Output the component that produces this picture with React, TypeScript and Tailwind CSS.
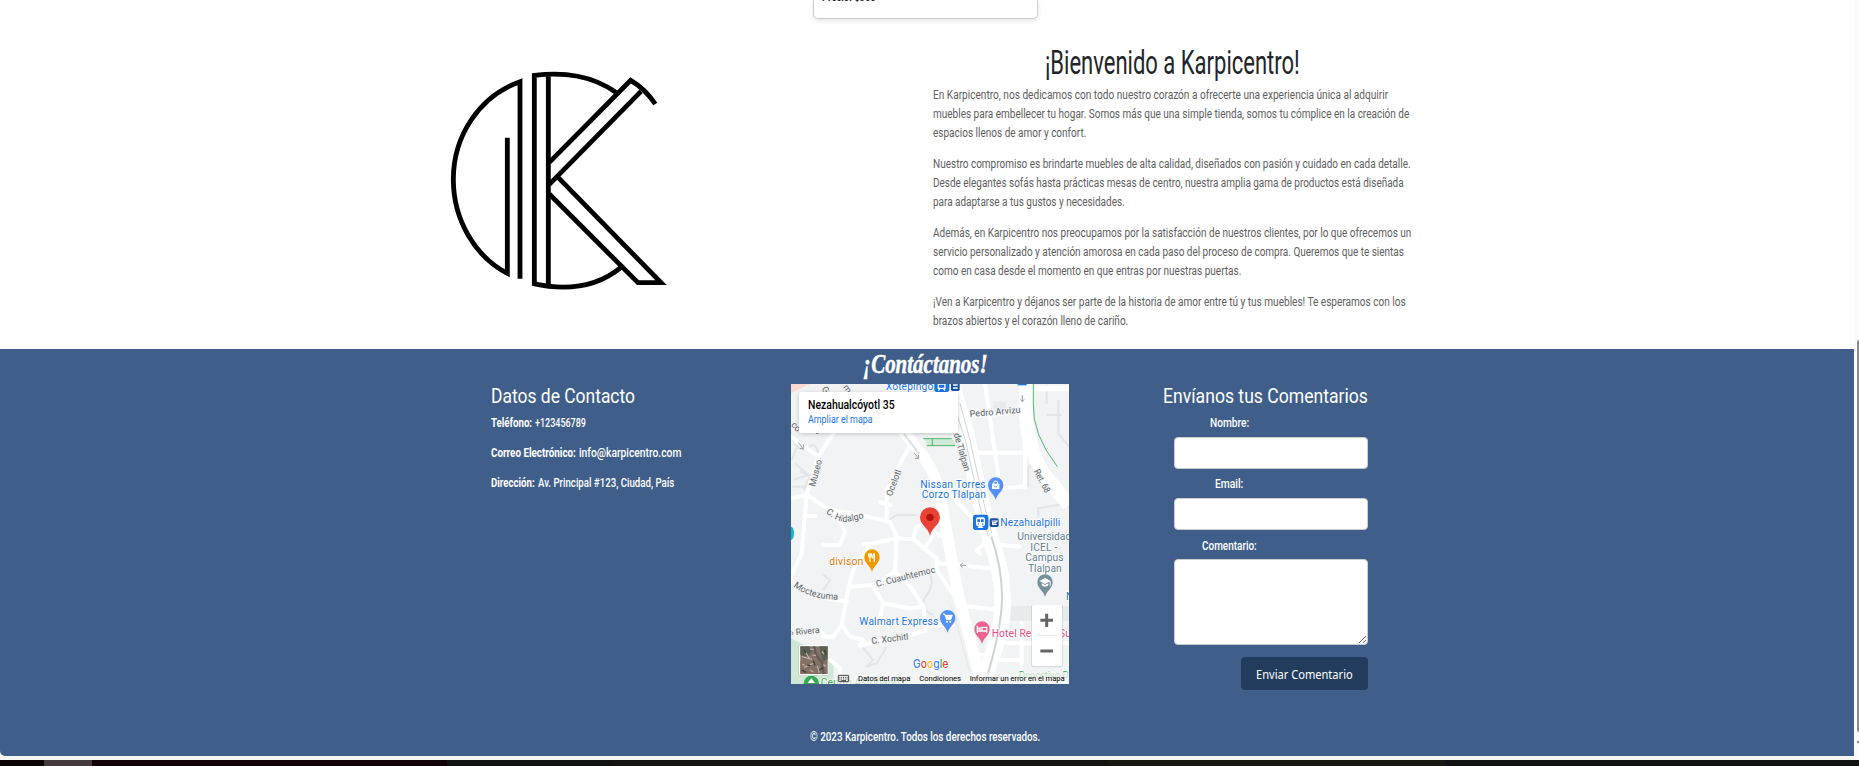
import { useLayoutEffect, useRef } from "react";
import type { ReactNode } from "react";

/** One line of text, condensed or widened to the width of its box. */
function Fit({ className = "", children }: { className?: string; children: ReactNode }) {
  const box = useRef<HTMLDivElement>(null);
  const inner = useRef<HTMLSpanElement>(null);
  useLayoutEffect(() => {
    if (!box.current || !inner.current) return;
    const ratio = box.current.clientWidth / inner.current.offsetWidth;
    inner.current.style.transform = `scaleX(${ratio})`;
  }, []);
  return (
    <div ref={box} className={`whitespace-nowrap ${className}`}>
      <span ref={inner} className="inline-block origin-left">
        {children}
      </span>
    </div>
  );
}

function Logo() {
  return (
    <svg
      viewBox="0 0 780 780"
      className="h-[260px] w-[260px] shrink-0"
      fill="none"
      stroke="#000"
      strokeWidth="14.5"
    >
      <path d="M270 686V95C150 138 70 255 70 388C70 510 135 620 232 670V263" />
      <path d="M355 705V76M313 707V76C405 66 485 76 560 128" />
      <path d="M310 701C405 722 495 716 573 652" />
      <path d="M358 337L602 91Q645 116 676 162" />
      <path d="M633 124L358 403" />
      <path d="M382 380L693 698H624L358 432" />
    </svg>
  );
}

function Pin({ x, y, color, children }: { x: number; y: number; color: string; children?: ReactNode }) {
  return (
    <g transform={`translate(${x} ${y})`}>
      <path d="M0 44C-4 26-23 18-23-1A23 23 0 0 1 23-1C23 18 4 26 0 44Z" fill={color} />
      {children}
    </g>
  );
}

function MapArt() {
  return (
    <svg
      viewBox="33 132 834 900"
      className="block h-[300px] w-[278px]"
      fontFamily="Roboto, sans-serif"
      fontSize="31"
    >
      <defs>
        <path id="hidalgo" d="M137 518Q175 550 205 545T262 530" />
        <path id="moctezuma" d="M40 738Q85 778 185 780" />
      </defs>
      <rect x="33" y="132" width="834" height="900" fill="#f1f3f4" />
      <path d="M33 132H90L33 160Z" fill="#fbd9d3" />
      <path d="M33 895L95 925L160 970V1032H33Z" fill="#cfe8d5" />
      <path d="M690 798H867V842H690Z" fill="#e8eaed" />
      <path d="M640 185h38v30h-38z" fill="#e8eaed" />
      <path d="M430 294H515L530 318H445Z" fill="#ceead6" />
      <g fill="none" stroke="#e3e5e8" strokeWidth="6">
        <path d="M40 310q30 30 50 10t30 45-60 30M45 370l45 40-20 40M40 420l60-20M60 300l-25 60M35 440h40" />
        <path d="M745 440V385L765 360M775 530V505L867 490M835 180v100l32 40M800 225h45M800 132v60" />
        <path d="M440 685q30 40 0 80t20 60M130 705l20 15-20 30M250 925l30 35-20 20 30-10 30-50M320 545l30-20 60 0" />
      </g>
      <g fill="none" stroke="#fff" strokeLinecap="round" strokeLinejoin="round" strokeWidth="12">
        <path d="M33 290L115 350L160 280L215 210" />
        <path d="M115 350L80 465L65 640L33 710" />
        <path d="M33 475L80 465L150 510L240 525L330 545L350 590L345 700M80 528H106" />
        <path d="M385 325L320 450V545M300 487L330 495" />
        <path d="M130 615H180L195 575L160 510" />
        <path d="M250 612H270L350 595L400 598L470 655V690L520 765" />
        <path d="M400 595L410 560L445 550M438 618L465 580L490 590" />
        <path d="M265 620L220 690L205 745L185 855L160 890L130 890L125 870" />
        <path d="M33 720L90 765L200 785M210 740L280 735L345 695L395 745L430 800L440 870L380 890L240 915" />
        <path d="M280 740L310 790L390 805L430 800M310 790L300 830" />
        <path d="M185 855L210 890L250 900L240 918" />
        <path d="M475 670L630 685M550 798L640 808M455 855H520" />
        <path d="M575 338H735M565 230L735 215M615 132L660 440M735 132V440L660 445" />
        <path d="M500 450L590 550M600 640L590 630L615 610L720 620" />
        <path d="M670 910H867M660 960H725V1032M725 850V960M600 945H640M150 960L180 985V1000" />
      </g>
      <g fill="none" stroke="#fff" strokeLinejoin="round">
        <path d="M290 170L430 350Q480 420 490 520L535 765L605 1032" strokeWidth="34" />
        <path d="M515 132L560 290L610 520L635 610Q668 690 668 790T602 1032" strokeWidth="50" />
        <path d="M740 132Q725 300 790 400L867 495" strokeWidth="42" />
        <path d="M730 145H867" strokeWidth="17" />
      </g>
      <g fill="none" strokeWidth="2.5">
        <path d="M520 190L556 300L600 500L625 590M540 190L570 300L614 500L635 580" stroke="#c6cbd0" />
        <path d="M634 590Q668 690 666 780T615 1032" stroke="#ccd3d8" strokeWidth="6" />
        <path d="M515 800L580 1032" stroke="#dfe3e6" />
        <path d="M372 282L418 342" stroke="#d5e2e0" strokeWidth="6" />
        <path d="M430 296H515M440 317H525M457 296V317M760 132V190Q755 280 832 380" stroke="#53b66c" strokeWidth="3" />
      </g>
      <g fill="none" stroke="#9aa0a6" strokeWidth="3">
        <path d="M55 307l15 20m-11-2 11 2V313M402 338l14 18m-11-1 11 1V344M727 165v20m-6-7 6 7 6-7M558 676H541m7-6-8 6 8 6" />
      </g>

      <path d="M33 560A9 20 0 0 1 33 600Z" fill="#12b5cb" />
      <g fill="#5f6368" fontSize="27" stroke="#f1f3f4" strokeWidth="5" paintOrder="stroke">
        <text transform="translate(124 148) rotate(52)">Gri</text>
        <text transform="translate(188 142) rotate(55)">ma</text>
        <text transform="translate(32 255) rotate(50)">co</text>
        <text transform="translate(98 268) rotate(50)">io</text>
        <text transform="translate(570 231) rotate(-5)" textLength="153">Pedro Arvizu</text>
        <text transform="translate(521 282) rotate(74)" textLength="118">de Tlalpan</text>
        <text transform="translate(105 441) rotate(-75)" textLength="82">Museo</text>
        <text transform="translate(335 470) rotate(-69)" textLength="82">Ocelotl</text>
        <text transform="translate(761 394) rotate(62)" textLength="75" lengthAdjust="spacingAndGlyphs">Ret. 68</text>
        <text>
          <textPath href="#hidalgo">C. Hidalgo</textPath>
        </text>
        <text transform="translate(290 741) rotate(-14)" textLength="183">C. Cuauhtemoc</text>
        <text>
          <textPath href="#moctezuma">Moctezuma</textPath>
        </text>
        <text transform="translate(34 887) rotate(-6)" textLength="86">› Rivera</text>
        <text transform="translate(275 912) rotate(-7)" textLength="112">C. Xochitl</text>
      </g>

      <g stroke="#fff" strokeWidth="5" paintOrder="stroke">
        <g fill="#1a73e8">
          <text x="317" y="151" textLength="143">Xotepingo</text>
          <text x="421" y="443" textLength="196">Nissan Torres</text>
          <text x="425" y="474" textLength="193">Corzo Tlalpan</text>
          <text x="661" y="558" textLength="180">Nezahualpilli</text>
          <text x="238" y="856" textLength="237">Walmart Express</text>
          <text x="858" y="780">N</text>
        </g>
        <text x="148" y="674" textLength="102" fill="#e37400">divison</text>
        <g fill="#607d8b">
          <text x="712" y="600">Universidad</text>
          <text x="751" y="632" textLength="80">ICEL -</text>
          <text x="736" y="663" textLength="115">Campus</text>
          <text x="744" y="695" textLength="101">Tlalpan</text>
        </g>
        <text x="635" y="891" fill="#ea4b83" textLength="238">Hotel Real del Su</text>
        <text x="716" y="1015" fill="#34a853" fontSize="29">Deportivo D</text>
        <text x="122" y="1038" fill="#34a853" textLength="236">Centro Asturiano</text>
      </g>

      <g>
        <rect x="463" y="110" width="45" height="46" rx="8" fill="#1a73e8" />
        <path d="M475 132h20v13h-20zM475 152l5-6m15 6-5-6" stroke="#fff" strokeWidth="4" fill="none" />
        <rect x="513" y="124" width="26" height="29" rx="5" fill="#174ea6" />
        <path d="M519 135h14M519 144h14" stroke="#fff" strokeWidth="4" />
        <path d="M713 132h27v4h-27z" fill="#1a73e8" />
        <rect x="579" y="524" width="46" height="46" rx="8" fill="#1a73e8" />
        <path
          d="M588 537q0-5 5-5h17q5 0 5 5v16q0 5-5 5h-17q-5 0-5-5zM592 564l5-6h9l5 6"
          fill="#fff"
        />
        <path d="M592 538h8v8h-8zm11 0h8v8h-8z" fill="#1a73e8" />
        <circle cx="595" cy="552" r="2.5" fill="#1a73e8" />
        <circle cx="608" cy="552" r="2.5" fill="#1a73e8" />
        <rect x="629" y="535" width="27" height="26" rx="5" fill="#174ea6" />
        <path d="M635 543h16l-4 5h-9v5h12" stroke="#fff" strokeWidth="3.5" fill="none" />
      </g>

      <Pin x={647} y={436} color="#5491f5">
        <path d="M-11-5h22v16h-22z" fill="#fff" />
        <path d="M-6-4v-3a6 6 0 0 1 12 0v3" fill="none" stroke="#fff" strokeWidth="3" />
        <path d="M-5 0a5 5 0 0 0 10 0" fill="none" stroke="#5491f5" strokeWidth="2.5" />
      </Pin>
      <Pin x={276} y={652} color="#f29900">
        <path d="M-10-12v8q0 4 4 4t4-4v-8M-6-12V14M7-12V14M7-12q-5 3-5 14h5" fill="none" stroke="#fff" strokeWidth="3.5" />
      </Pin>
      <Pin x={503} y={834} color="#5491f5">
        <path d="M-14-12h5l6 17H9L14-8H-7" fill="#fff" stroke="#fff" strokeWidth="3" />
        <circle cx="-2" cy="11" r="3" fill="#fff" />
        <circle cx="8" cy="11" r="3" fill="#fff" />
      </Pin>
      <Pin x={606} y={868} color="#f06292">
        <path d="M-14-11V11M-14 5H14V10M14 5V-6H0V3" fill="none" stroke="#fff" strokeWidth="4" />
        <circle cx="-7" cy="-2" r="4" fill="#fff" />
      </Pin>
      <Pin x={795} y={727} color="#78909c">
        <path d="M-17-4L0-13L17-4L0 5zM-10 3v6q10 8 20 0V3L0 8zM14-3h3v13h-3z" fill="#fff" />
      </Pin>
      <g>
        <path d="M450 588C446 563 420 556 420 532A30 30 0 0 1 480 532C480 556 454 563 450 588Z" fill="#ea4335" />
        <circle cx="450" cy="532" r="11" fill="#b31412" />
      </g>
      <circle cx="94" cy="1030" r="23" fill="#34a853" />
      <path d="M94 1014l-11 15h22z" fill="#fff" />

      <text
        x="399"
        y="984"
        textLength="106"
        lengthAdjust="spacingAndGlyphs"
        fontSize="34"
        fontFamily="Inter, sans-serif"
        fontWeight="500"
        stroke="#fff"
        strokeWidth="5"
        paintOrder="stroke"
      >
        <tspan fill="#4285f4">G</tspan>
        <tspan fill="#ea4335">o</tspan>
        <tspan fill="#fbbc05">o</tspan>
        <tspan fill="#4285f4">g</tspan>
        <tspan fill="#34a853">l</tspan>
        <tspan fill="#ea4335">e</tspan>
      </text>

      <rect x="165" y="997" width="702" height="35" fill="#f5f5f5" fillOpacity=".7" />
      <g fill="none" stroke="#222" strokeWidth="2.5">
        <rect x="175" y="1006" width="31" height="19" rx="1" />
        <path d="M178 1012h26M178 1017h26" strokeDasharray="3 2.5" />
        <path d="M184 1022h14" />
      </g>
      <g fill="#000" fontSize="23">
        <text x="234" y="1024" textLength="157">Datos del mapa</text>
        <text x="418" y="1024" textLength="125">Condiciones</text>
        <text x="569" y="1024" textLength="285">Informar un error en el mapa</text>
      </g>

      <g>
        <rect x="55" y="915" width="92" height="92" rx="6" fill="#000" opacity=".12" />
        <rect x="57" y="915" width="89" height="91" rx="5" fill="#fff" />
        <rect x="61" y="919" width="82" height="83" fill="#817268" />
        <path d="M61 919h26l10 14-14 18-22-6zM118 919h25v38l-14 7-6-20z" fill="#5d5f55" />
        <path d="M61 962l26 8 12 32H61z" fill="#84705f" />
        <path d="M102 919l6 24 18 25 5 34" stroke="#65585a" strokeWidth="7" fill="none" />
        <path d="M66 950l30 8M76 936l14 22M98 946h10M112 978l6 20M72 982l28-12M130 974l8 5M90 990l10 6M66 972l8 4M90 928h12M126 934l6 8" stroke="#c0aca2" strokeWidth="4" />
        <path d="M72 930l6 9M100 962l5 14M134 930l3 14M82 975l9 2M118 990l10-6M65 990l13 7" stroke="#3b3b34" strokeWidth="4" />
      </g>
      <g>
        <rect x="753" y="794" width="96" height="188" rx="7" fill="#000" opacity=".1" />
        <rect x="756" y="794" width="90" height="184" rx="5" fill="#fff" />
        <path d="M766 886h68" stroke="#e6e6e6" strokeWidth="3" />
        <path d="M781 841h38M800 821v40M781 933h38" stroke="#666" strokeWidth="9" />
      </g>
    </svg>
  );
}

function Para({ children, className = "mb-[11.4px]" }: { children: ReactNode; className?: string }) {
  return <div className={`text-[12.5px] leading-[19.2px] text-[#5e5e5e] ${className}`}>{children}</div>;
}

export default function App() {
  return (
    <div className="flex h-[766px] w-full flex-col overflow-hidden bg-white font-[Roboto,sans-serif]">
      <div className="flex h-[760px] w-full">
        <div className="flex w-[1854px] shrink-0 flex-col">
          <div className="flex h-[19px] justify-start pl-[813px]">
            <div className="h-[19px] w-[225px] rounded-b-[5px] border border-t-0 border-[#ccc] shadow-[0_2px_5px_rgba(0,0,0,0.1)]">
              <Fit className="-mt-[10px] ml-[8px] w-[54px] text-[12px] leading-[14px] font-bold text-[#212529]">
                Precio: $350
              </Fit>
            </div>
          </div>

          <section className="flex h-[330px] shrink-0 pl-[430px]">
            <div className="w-[503px] shrink-0 pt-[31px]">
              <Logo />
            </div>
            <div className="w-[480px] pt-[22px]">
              <Fit className="ml-[112px] w-[255px] text-[34px] leading-[42px] text-[#212529]">
                ¡Bienvenido a Karpicentro!
              </Fit>
              <div className="pt-[2px]">
                <Para>
                  <Fit className="w-[455px]">En Karpicentro, nos dedicamos con todo nuestro corazón a ofrecerte una experiencia única al adquirir</Fit>
                  <Fit className="w-[476px]">muebles para embellecer tu hogar. Somos más que una simple tienda, somos tu cómplice en la creación de</Fit>
                  <Fit className="w-[153px]">espacios llenos de amor y confort.</Fit>
                </Para>
                <Para>
                  <Fit className="w-[478px]">Nuestro compromiso es brindarte muebles de alta calidad, diseñados con pasión y cuidado en cada detalle.</Fit>
                  <Fit className="w-[471px]">Desde elegantes sofás hasta prácticas mesas de centro, nuestra amplia gama de productos está diseñada</Fit>
                  <Fit className="w-[192px]">para adaptarse a tus gustos y necesidades.</Fit>
                </Para>
                <Para>
                  <Fit className="w-[478px]">Además, en Karpicentro nos preocupamos por la satisfacción de nuestros clientes, por lo que ofrecemos un</Fit>
                  <Fit className="w-[471px]">servicio personalizado y atención amorosa en cada paso del proceso de compra. Queremos que te sientas</Fit>
                  <Fit className="w-[308px]">como en casa desde el momento en que entras por nuestras puertas.</Fit>
                </Para>
                <Para className="">
                  <Fit className="w-[473px]">¡Ven a Karpicentro y déjanos ser parte de la historia de amor entre tú y tus muebles! Te esperamos con los</Fit>
                  <Fit className="w-[195px]">brazos abiertos y el corazón lleno de cariño.</Fit>
                </Para>
              </div>
            </div>
          </section>

          <footer className="flex h-[407px] shrink-0 flex-col rounded-bl-[5px] bg-[#3f5f8a] text-white">
            <Fit className="ml-[863px] h-[35px] w-[125px] font-['Liberation_Serif',serif] text-[27px] leading-[30px] font-bold italic [-webkit-text-stroke:0.5px_white]">
              ¡Contáctanos!
            </Fit>
            <div className="flex h-[300px] pl-[491px] text-[12.5px] leading-[20px] font-medium">
              <div className="w-[300px]">
                <Fit className="w-[144px] text-[20px] leading-[24px] font-normal">Datos de Contacto</Fit>
                <div className="mt-[5px] mb-[10px] flex gap-[3px]">
                  <Fit className="w-[41px] font-bold">Teléfono:</Fit>
                  <Fit className="w-[51px]">+123456789</Fit>
                </div>
                <div className="mb-[10px] flex gap-[3px]">
                  <Fit className="w-[85px] font-bold">Correo Electrónico:</Fit>
                  <Fit className="w-[102px]">info@karpicentro.com</Fit>
                </div>
                <div className="flex gap-[3px]">
                  <Fit className="w-[44px] font-bold">Dirección:</Fit>
                  <Fit className="w-[136px]">Av. Principal #123, Ciudad, País</Fit>
                </div>
              </div>

              <div className="relative h-[300px] w-[278px] shrink-0 overflow-hidden font-normal">
                <MapArt />
                <div className="absolute top-[8px] left-[8px] h-[41px] w-[159px] rounded-[2px] bg-white pt-[5px] pl-[8.5px] shadow-[0_1px_4px_rgba(0,0,0,0.2)]">
                  <Fit className="w-[87px] text-[12px] leading-[17px] font-medium text-black">Nezahualcóyotl 35</Fit>
                  <Fit className="w-[65px] text-[10px] leading-[12px] text-[#1a73e8]">Ampliar el mapa</Fit>
                </div>
              </div>

              <form className="flex w-[299px] flex-col items-end" onSubmit={(e) => e.preventDefault()}>
                <Fit className="w-[205px] text-[20px] leading-[24px] font-normal">Envíanos tus Comentarios</Fit>
                <Fit className="mt-[5px] mr-[119px] w-[39px]">Nombre:</Fit>
                <input className="mt-[4px] h-[32px] w-[194px] shrink-0 rounded-[4px] border border-[#ccc] bg-white text-black" />
                <Fit className="mt-[5px] mr-[125px] w-[28px]">Email:</Fit>
                <input className="mt-[4px] h-[32px] w-[194px] shrink-0 rounded-[4px] border border-[#ccc] bg-white text-black" />
                <Fit className="mt-[6px] mr-[111px] w-[55px]">Comentario:</Fit>
                <textarea className="mt-[3px] h-[86px] w-[194px] shrink-0 resize rounded-[4px] border border-[#ccc] bg-white text-black" />
                <button className="mt-[12px] h-[33px] w-[127px] shrink-0 rounded-[4px] bg-[#223c5e] pl-[15px] text-left">
                  <Fit className="w-[97px] font-['Noto_Sans',sans-serif] text-[12.8px] leading-[20px] font-normal">Enviar Comentario</Fit>
                </button>
              </form>
            </div>
            <Fit className="mt-[43px] ml-[810px] w-[230px] text-[12.5px] leading-[20px] font-medium">
              © 2023 Karpicentro. Todos los derechos reservados.
            </Fit>
          </footer>
          <div className="h-[4px] bg-[#f5f5f3]" />
        </div>

        <div className="flex w-[5px] shrink-0 flex-col items-end bg-[#fbfbfb] pt-[340px]">
          <div className="h-[392px] w-[2px] rounded-l-[2px] bg-[#8b8b8b]" />
          <div className="mt-[9px] h-[2px] w-[2px] bg-[#8b8b8b]" />
        </div>
      </div>
      <div className="flex h-[6px] w-full bg-[#100c0c]">
        <div className="w-[44px] bg-[#0b0204]" />
        <div className="w-[48px] bg-[#443a3e]" />
        <div className="w-[355px] bg-[#100206]" />
        <div className="w-[163px] bg-[#101312]" />
        <div className="w-[500px] bg-[#14130f]" />
        <div className="w-[335px] bg-[#17170f]" />
        <div className="grow bg-[#101211]" />
      </div>
    </div>
  );
}
